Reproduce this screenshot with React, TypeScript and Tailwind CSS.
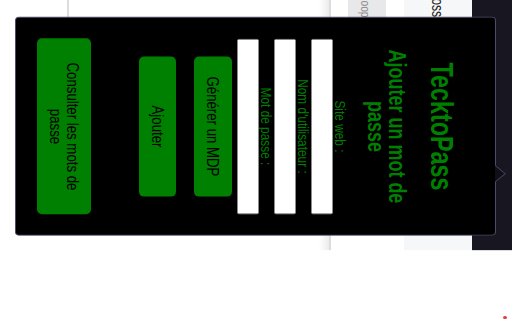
import React from "react";

export default function App() {
  return (
    <div className="w-[512px] h-[320px] overflow-hidden bg-white">
      <div className="relative flex flex-col w-[418.3px] h-[512px] bg-white origin-top-left [transform:translateX(512px)_rotate(90deg)_scaleX(0.765)] font-['Liberation_Sans',Arial,sans-serif]">
        {/* page behind the popup */}
        <div className="h-[40px] w-[327px] shrink-0 bg-[#171621]" />
        <div className="h-[68px] w-[327px] shrink-0 overflow-hidden bg-[#f6f7f9] pt-[26px]">
          <div className="ml-[-14px] whitespace-nowrap text-[16px] leading-[18px] text-[#222]">Dossiers</div>
        </div>
        <div className="h-[18px] shrink-0" />
        <div className="h-[38px] w-[80px] shrink-0 overflow-hidden bg-[#e8e8ea] pt-[13px]">
          <div className="ml-[-10px] whitespace-nowrap text-[13.5px] leading-[16px] text-[#8e8e8e]">Goop</div>
        </div>
        <div className="h-[17px] shrink-0" />
        <div className="h-[2px] w-[327px] shrink-0 bg-[#dcdcdc]" />
        <div className="h-[10px] w-[327px] shrink-0 bg-linear-to-b from-[#ececec] to-white" />
        <div className="h-[250px] shrink-0" />
        <div className="h-[1.5px] w-[60px] shrink-0 bg-[#dddddd]" />

        {/* popup */}
        <div className="absolute left-[22.2px] top-[16px] flex h-[481px] w-[286.3px] flex-col items-center rounded-[5px/4px] border border-[#4d4b6b] bg-black pt-[36px]">
          <h1 className="text-[30.5px] leading-[35px] font-bold text-[#008000]">TecktoPass</h1>
          <h2 className="mt-[17.4px] w-[229px] text-center text-[23.5px] leading-[20.6px] font-bold text-[#008000]">
            Ajouter un mot de passe
          </h2>
          <div className="mt-[17.2px] flex w-[229px] flex-col items-center">
            <label className="h-[15px] text-[15.5px] leading-[15px] text-[#008000]">Site web :</label>
            <input className="h-[22px] w-full rounded-[2px] border border-[#8d8d8d] bg-white outline-none" />
            <label className="h-[15px] text-[15.5px] leading-[15px] text-[#008000]">Nom d'utilisateur :</label>
            <input className="h-[22px] w-full rounded-[2px] border border-[#8d8d8d] bg-white outline-none" />
            <label className="h-[15px] text-[15.5px] leading-[15px] text-[#008000]">Mot de passe :</label>
            <input className="h-[22px] w-full rounded-[2px] border border-[#8d8d8d] bg-white outline-none" />
          </div>
          <button className="mt-[5.5px] w-[183px] rounded-[6.5px/5px] bg-[#008000] px-[16px] py-[10.3px] text-center text-[17.3px] leading-[16.7px] text-black">
            Générer un MDP
          </button>
          <button className="mt-[18.3px] w-[183px] rounded-[6.5px/5px] bg-[#008000] px-[16px] py-[10.3px] text-center text-[17.3px] leading-[16.7px] text-black">
            Ajouter
          </button>
          <button className="mt-[48px] w-[230px] rounded-[6.5px/5px] bg-[#008000] px-[16px] py-[10px] text-center text-[17.3px] leading-[16.7px] text-black">
            Consulter les mots de passe
          </button>
        </div>

        {/* popup anchor arrow */}
        <svg className="absolute left-[215.7px] top-[6px] h-[11px] w-[22px]" viewBox="0 0 22 11">
          <polyline points="0,11 11,0.8 22,11" fill="#100f17" stroke="#3e3c5a" strokeWidth="1.2" />
        </svg>

        {/* red dot */}
        <div className="absolute left-[413px] top-[5px] h-[4px] w-[4px] rounded-full bg-[#e53935]" />
      </div>
    </div>
  );
}
